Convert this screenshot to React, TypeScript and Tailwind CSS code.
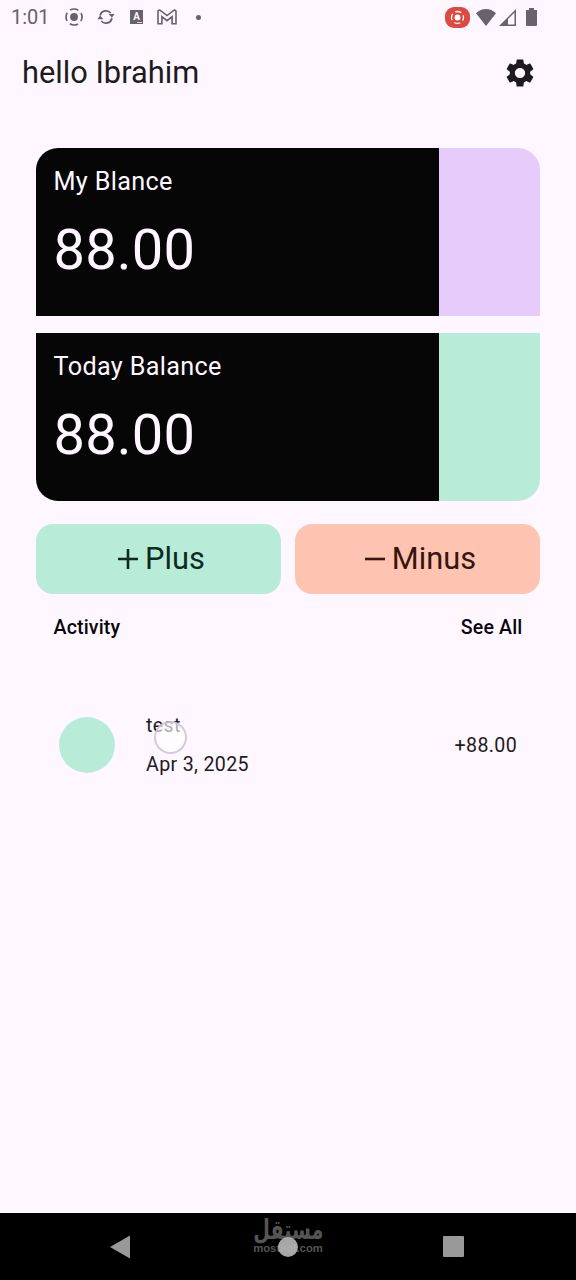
import { MdSettings } from "react-icons/md";

type BalanceCardProps = {
  title: string;
  amount: string;
  cardClass: string;
  accentClass: string;
};

function BalanceCard({ title, amount, cardClass, accentClass }: BalanceCardProps) {
  return (
    <div className={`flex h-[168px] overflow-hidden ${cardClass}`}>
      <div className="w-[403px] bg-[#060606] pl-[17.5px] pt-[17.5px] text-[#fef7ff]">
        <div className="text-[25.2px] leading-[32px] tracking-[0.35px]">{title}</div>
        <div className="mt-[19px] text-[56px] leading-[67px] tracking-[0.2px]">{amount}</div>
      </div>
      <div className={`flex-1 ${accentClass}`} />
    </div>
  );
}

function RecordIcon({ className }: { className?: string }) {
  return (
    <svg viewBox="0 0 20 20" className={className} fill="none" stroke="currentColor">
      <circle cx="10" cy="10" r="3.9" fill="currentColor" stroke="none" />
      <circle
        cx="10"
        cy="10"
        r="8"
        strokeWidth="1.7"
        strokeDasharray="8.57 4"
        strokeDashoffset="4.28"
      />
    </svg>
  );
}

function StatusBar() {
  return (
    <div className="flex h-[34px] items-center pl-[11px] pr-[39px] text-[#69616b]">
      <span className="w-[53px] text-[20px] leading-[34px]">1:01</span>
      <RecordIcon className="h-5 w-5" />
      {/* Sync */}
      <svg viewBox="0 0 18 18" className="ml-[13px] h-[18px] w-[18px]">
        <path
          d="M3.1 7.5A6.1 6.1 0 0 1 13.7 5M14.9 10.2A6.1 6.1 0 0 1 4.3 13"
          fill="none"
          stroke="currentColor"
          strokeWidth="1.8"
        />
        <path d="M11.6 6h6L14.9 9.8zM.4 11.2h6L3.1 7.4z" fill="currentColor" />
      </svg>
      {/* Keyboard language */}
      <div className="relative ml-[15px] h-[14px] w-[13px] bg-current">
        <span className="absolute inset-0 text-center text-[10px] font-bold leading-[13px] text-[#fef7ff]">
          A
        </span>
        <span className="absolute bottom-px right-[1px] h-px w-[5px] bg-[#d8cfda]" />
      </div>
      {/* Mail */}
      <svg viewBox="0 0 20 16" className="ml-[14px] h-4 w-5">
        <path
          d="M1 14.8V2.6C1 1.2 2.5.7 3.6 1.6L10 6.6l6.4-5C17.5.7 19 1.2 19 2.6v12.2h-3.9V7.6L10 11.7 4.9 7.6v7.2z"
          fill="none"
          stroke="currentColor"
          strokeWidth="1.6"
        />
      </svg>
      <span className="ml-[19px] h-[5px] w-[5px] rounded-full bg-current" />

      <div className="ml-auto flex items-center">
        <div className="flex h-[21px] w-[25px] items-center justify-center rounded-[9px] bg-[#dc4a40] text-white">
          <RecordIcon className="h-[15px] w-[15px]" />
        </div>
        <svg viewBox="0 0 20 17" className="ml-[6px] h-[17px] w-5" fill="currentColor">
          <path d="M10 17 0 4.3C5.7-1.4 14.3-1.4 20 4.3z" />
        </svg>
        <svg viewBox="0 0 17 17" className="ml-[3px] h-[17px] w-[17px]" fill="currentColor">
          <path d="M17 0v17H0zM15.5 3.5 9 10v5.5h6.5z" fillRule="evenodd" />
        </svg>
        <svg viewBox="0 0 11 18" className="ml-[10px] h-[18px] w-[11px]" fill="currentColor">
          <path d="M3 0h5v2h3v14.7c0 .8-.5 1.3-1.3 1.3H1.3C.5 18 0 17.5 0 16.7V2h3z" />
        </svg>
      </div>
    </div>
  );
}

function NavigationBar() {
  return (
    <div className="relative flex h-[67px] items-center justify-between bg-black px-[110px] text-[#999999]">
      <svg viewBox="0 0 20 24" className="h-6 w-5" fill="currentColor">
        <path d="M20 .5v23L0 12z" />
      </svg>
      <div className="absolute inset-x-0 top-[4px] flex flex-col items-center text-[#555555]">
        <span
          dir="rtl"
          className="h-[25px] scale-x-[0.71] text-[27px] font-bold leading-[26px] font-['DejaVu_Sans',sans-serif]"
        >
          مستقل
        </span>
        <span className="text-[11.3px] font-bold leading-[12px] font-['Liberation_Sans',sans-serif]">
          mostaql.com
        </span>
      </div>
      <span className="relative ml-[2px] h-5 w-5 rounded-full bg-[#b8b8b8]/90" />
      <span className="mr-[2px] h-[21px] w-[21px] rounded-[1px] bg-current" />
    </div>
  );
}

export default function App() {
  return (
    <div className="flex h-[1280px] w-[576px] flex-col overflow-hidden bg-[#fef7ff] text-[#1d1b20] font-[Roboto,sans-serif]">
      <StatusBar />

      <header className="flex h-[77px] items-center justify-between pl-[22px] pr-[39px]">
        <h1 className="text-[30.8px] leading-10">hello Ibrahim</h1>
        <MdSettings className="h-[34px] w-[34px]" />
      </header>

      <main className="flex-1 px-[36px] pt-[37px]">
        <div className="flex flex-col gap-[17px]">
          <BalanceCard
            title="My Blance"
            amount="88.00"
            cardClass="rounded-t-[22px]"
            accentClass="bg-[#e7cbfa]"
          />
          <BalanceCard
            title="Today Balance"
            amount="88.00"
            cardClass="rounded-b-[22px]"
            accentClass="bg-[#b9ecd8]"
          />
        </div>

        <div className="mt-[23px] flex gap-[14px] text-[30.8px]">
          <button className="flex h-[70px] flex-1 items-center justify-center gap-[7px] rounded-[17px] bg-[#b9ecd8] pl-[6px] text-[#0b2c1f]">
            <svg viewBox="0 0 20 20" className="h-5 w-5" stroke="currentColor" strokeWidth="2.6">
              <path d="M0 10h20M10 0v20" />
            </svg>
            Plus
          </button>
          <button className="flex h-[70px] flex-1 items-center justify-center gap-[7px] rounded-[17px] bg-[#ffc3b2] pl-[6px] text-[#35150c]">
            <svg viewBox="0 0 20 20" className="h-5 w-5" stroke="currentColor" strokeWidth="2.6">
              <path d="M0 10h20" />
            </svg>
            Minus
          </button>
        </div>

        <div className="mt-5 flex justify-between px-[17.5px] text-[19.6px] font-medium leading-7 tracking-[0.14px] text-[#09070b]">
          <span>Activity</span>
          <span>See All</span>
        </div>

        {/* Activity item */}
        <div className="mt-[70px] flex items-center px-[23px] text-[19.6px] tracking-[0.35px]">
          <div className="mb-[2px] h-14 w-14 rounded-full bg-[#b9ecd8]" />
          <div className="relative ml-[31px] flex flex-col gap-[11px] leading-7">
            <span>test</span>
            <span>Apr 3, 2025</span>
            <span className="absolute left-[8px] top-[9px] h-[33px] w-[33px] rounded-full border-2 border-[#cabcd6]/80 bg-white/65" />
          </div>
          <span className="ml-auto">+88.00</span>
        </div>
      </main>

      <NavigationBar />
    </div>
  );
}
